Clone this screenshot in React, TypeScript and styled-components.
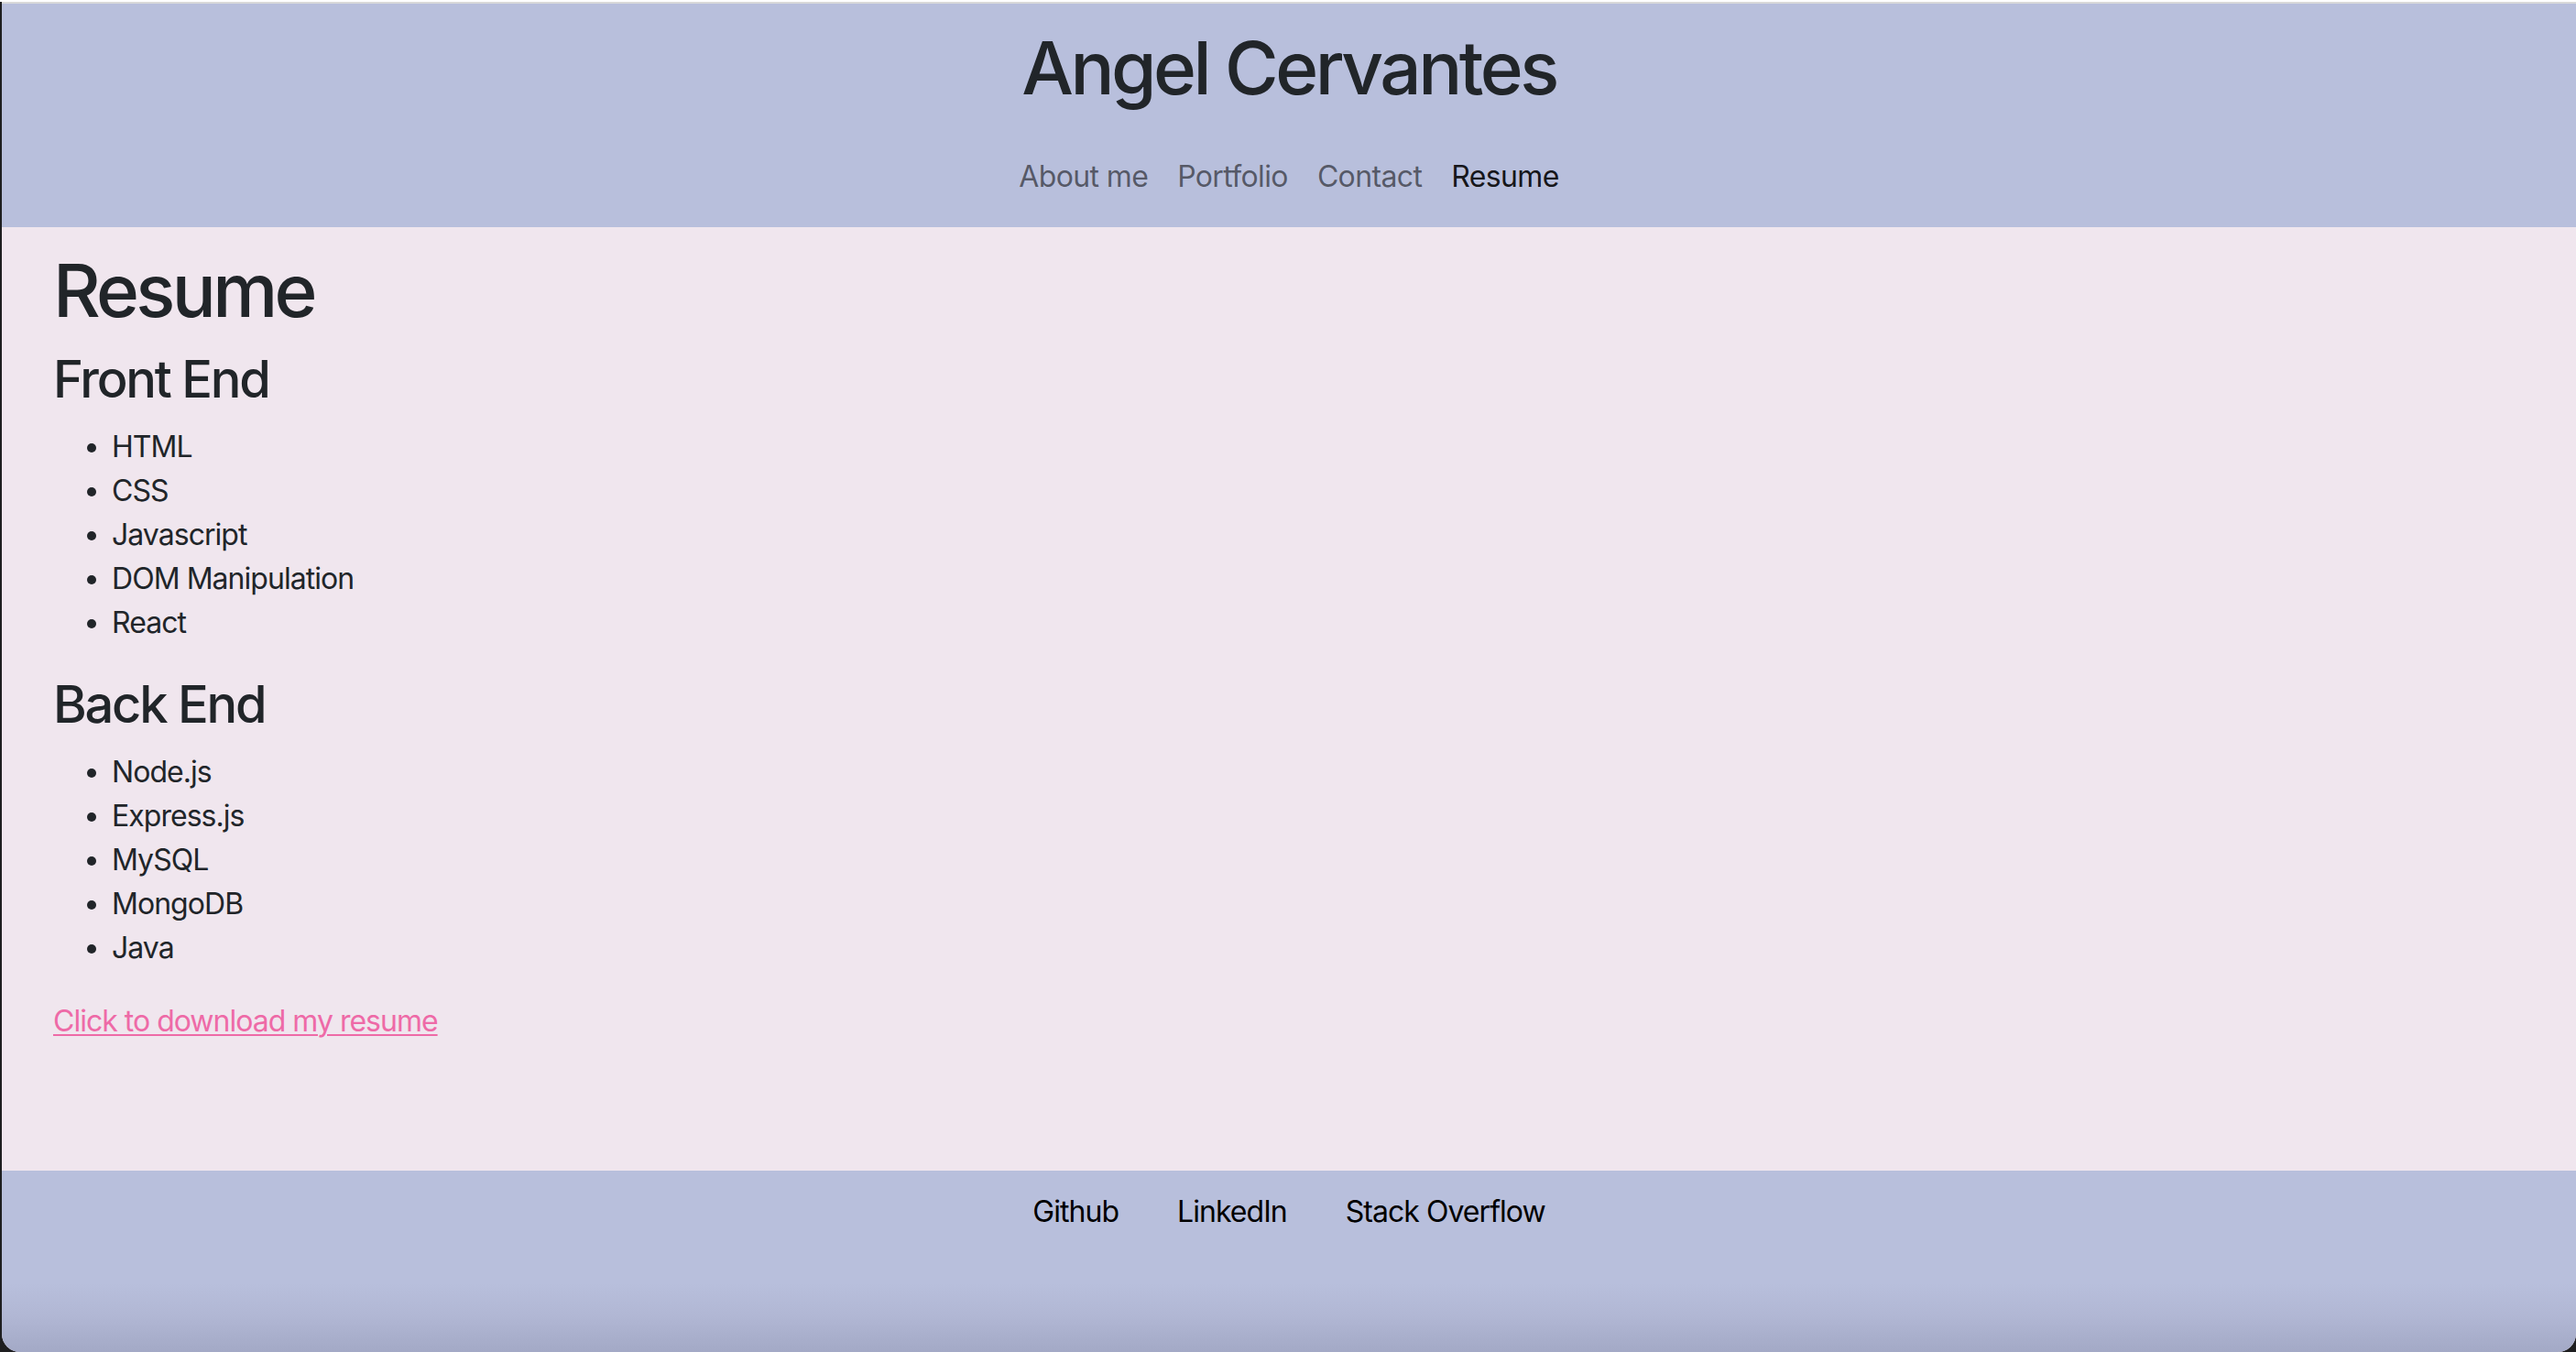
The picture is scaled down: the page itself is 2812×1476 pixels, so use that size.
import React from "react";
import styled, { createGlobalStyle } from "styled-components";

const GlobalStyle = createGlobalStyle`
  html, body {
    margin: 0;
    padding: 0;
  }
  body {
    background: linear-gradient(#ffffff 0 2px, #1e1e20 2px);
    font-family: Inter, "Noto Sans", "Liberation Sans", sans-serif;
    color: #212529;
    letter-spacing: -0.03em;
    -webkit-font-smoothing: antialiased;
  }
  * { box-sizing: border-box; }
`;

const Frame = styled.div`
  padding: 2px 0 0 2px;
  min-height: 100vh;
  display: flex;
`;

const Window = styled.div`
  flex: 1;
  display: flex;
  flex-direction: column;
  border-top: 2px solid #d9d9d9;
  border-radius: 0 0 20px 20px;
  overflow: hidden;
  background: #f0e6ee;
`;

const Header = styled.header`
  background: #b8bfdc;
  padding: 22px 0 31px;
  text-align: center;
`;

const Title = styled.h1`
  margin: 0 0 47px;
  font-size: 80px;
  font-weight: 500;
  line-height: 1.2;
  letter-spacing: -0.044em;
  color: #212529;
`;

const Nav = styled.nav`
  display: flex;
  justify-content: center;
`;

const NavLink = styled.a<{ $active?: boolean }>`
  padding: 0 16px;
  font-size: 32px;
  line-height: 48px;
  letter-spacing: -0.02em;
  text-decoration: none;
  color: ${(p) => (p.$active ? "rgba(0,0,0,0.9)" : "rgba(0,0,0,0.55)")};
  cursor: pointer;
`;

const Main = styled.main`
  flex: 1;
  padding: 21px 56px 40px;
  background: #f0e6ee;
`;

const PageTitle = styled.h1`
  margin: 0 0 16px;
  font-size: 80px;
  font-weight: 500;
  line-height: 1.2;
  letter-spacing: -0.046em;
`;

const SectionTitle = styled.h3`
  margin: 0 0 16px;
  font-size: 56px;
  font-weight: 500;
  line-height: 1.2;
  letter-spacing: -0.04em;
`;

const SkillList = styled.ul`
  margin: 0 0 32px;
  padding-left: 64px;
`;

const Skill = styled.li`
  font-size: 32px;
  line-height: 48px;
  letter-spacing: -0.03em;
`;

const Download = styled.a`
  font-size: 32px;
  line-height: 48px;
  letter-spacing: -0.031em;
  color: #ee6aa7;
  text-decoration: underline;
  text-underline-offset: 3px;
  text-decoration-thickness: 2px;
`;

const Footer = styled.footer`
  height: 198px;
  padding-top: 21px;
  display: flex;
  justify-content: center;
  align-items: flex-start;
  gap: 64px;
  background: linear-gradient(
    to bottom,
    #b8bfdc 0%,
    #b8bfdc 62%,
    #b1b7d4 80%,
    #a3a9c6 100%
  );
`;

const FooterLink = styled.a`
  font-size: 32px;
  line-height: 48px;
  letter-spacing: -0.03em;
  color: #000;
  text-decoration: none;
`;

const frontEnd = ["HTML", "CSS", "Javascript", "DOM Manipulation", "React"];
const backEnd = ["Node.js", "Express.js", "MySQL", "MongoDB", "Java"];

export default function App() {
  return (
    <>
      <GlobalStyle />
      <Frame>
        <Window>
          <Header>
            <Title>Angel Cervantes</Title>
            <Nav>
              <NavLink>About me</NavLink>
              <NavLink>Portfolio</NavLink>
              <NavLink>Contact</NavLink>
              <NavLink $active>Resume</NavLink>
            </Nav>
          </Header>
          <Main>
            <PageTitle>Resume</PageTitle>
            <SectionTitle>Front End</SectionTitle>
            <SkillList>
              {frontEnd.map((s) => (
                <Skill key={s}>{s}</Skill>
              ))}
            </SkillList>
            <SectionTitle>Back End</SectionTitle>
            <SkillList>
              {backEnd.map((s) => (
                <Skill key={s}>{s}</Skill>
              ))}
            </SkillList>
            <Download href="#">Click to download my resume</Download>
          </Main>
          <Footer>
            <FooterLink>Github</FooterLink>
            <FooterLink>LinkedIn</FooterLink>
            <FooterLink>Stack Overflow</FooterLink>
          </Footer>
        </Window>
      </Frame>
    </>
  );
}
